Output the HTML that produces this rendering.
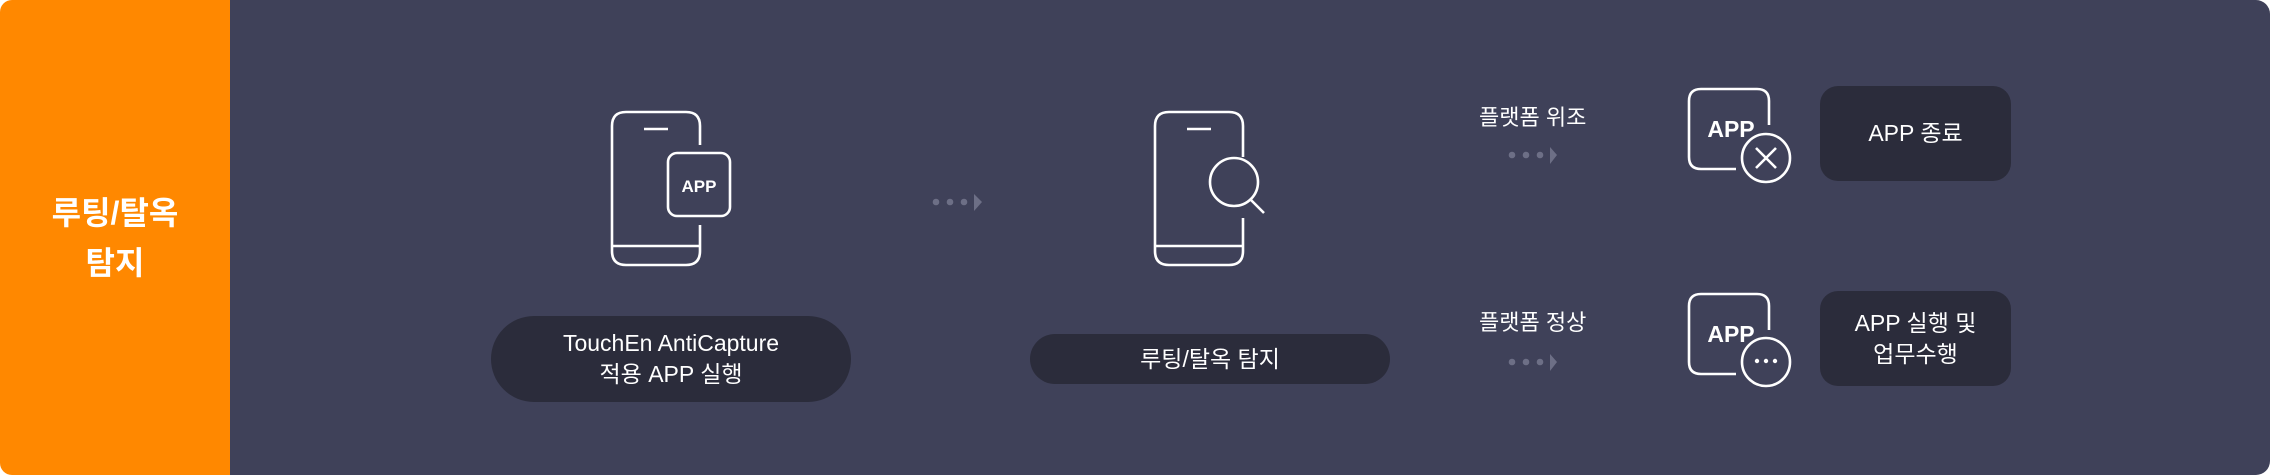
<!DOCTYPE html>
<html><head><meta charset="utf-8"><style>
html,body{margin:0;padding:0;background:#fff;}
body{width:2270px;height:475px;position:relative;overflow:hidden;font-family:"Liberation Sans","Noto Sans CJK KR",sans-serif;}
.orange{position:absolute;left:0;top:0;width:230px;height:475px;background:#ff8800;border-radius:12px 0 0 12px;}
.main{position:absolute;left:230px;top:0;width:2040px;height:475px;background:#3f4159;border-radius:0 14px 14px 0;}
.ot{position:absolute;left:0;width:230px;text-align:center;color:#fff;font-weight:bold;font-size:32px;line-height:50px;top:188px;}
.pill{position:absolute;background:#2b2c3b;color:#fff;text-align:center;font-size:23px;display:flex;align-items:center;justify-content:center;line-height:31px;}
.lbl{position:absolute;color:#fff;font-size:22px;}
svg{position:absolute;left:0;top:0;}
</style></head><body>
<div class="orange"></div>
<div class="main"></div>
<div class="ot">루팅/탈옥<br>탐지</div>
<svg width="2270" height="475" fill="none" stroke="#fff" stroke-width="2.6">
<path d="M700 145 V126 Q700 112 686 112 H626 Q612 112 612 126 V251 Q612 265 626 265 H686 Q700 265 700 251 V225"/>
<path d="M612 246 H700"/><path d="M644 129 H668"/>
<rect x="668" y="153" width="62" height="63" rx="9"/>
<text x="699" y="192" fill="#fff" stroke="none" font-size="17" font-weight="bold" text-anchor="middle" font-family="Liberation Sans">APP</text>
<path d="M1243 157 V126 Q1243 112 1229 112 H1169 Q1155 112 1155 126 V251 Q1155 265 1169 265 H1229 Q1243 265 1243 251 V218"/>
<path d="M1155 246 H1243"/><path d="M1187 129 H1211"/>
<circle cx="1234" cy="182" r="24"/><path d="M1251 200 L1264 213"/>
<path d="M1769 125 V101 Q1769 89 1757 89 H1701 Q1689 89 1689 101 V157 Q1689 169 1701 169 H1736"/>
<circle cx="1766" cy="158" r="24"/><path d="M1756 148 L1776 168 M1776 148 L1756 168"/>
<text x="1731" y="137" fill="#fff" stroke="none" font-size="23" font-weight="bold" text-anchor="middle" font-family="Liberation Sans">APP</text>
<path d="M1769 330 V306 Q1769 294 1757 294 H1701 Q1689 294 1689 306 V362 Q1689 374 1701 374 H1736"/>
<circle cx="1766" cy="362" r="24"/>
<text x="1731" y="342" fill="#fff" stroke="none" font-size="23" font-weight="bold" text-anchor="middle" font-family="Liberation Sans">APP</text>
<g fill="#fff" stroke="none"><circle cx="1757" cy="361" r="2.2"/><circle cx="1766" cy="361" r="2.2"/><circle cx="1775" cy="361" r="2.2"/></g>
<g fill="#6d6f86" stroke="none">
<circle cx="936" cy="202" r="3.3"/><circle cx="950" cy="202" r="3.3"/><circle cx="964" cy="202" r="3.3"/><path d="M974 194 L982 202 L974 211Z"/>
<circle cx="1512" cy="155" r="3.3"/><circle cx="1526" cy="155" r="3.3"/><circle cx="1540" cy="155" r="3.3"/><path d="M1550 147 L1557 155 L1550 164Z"/>
<circle cx="1512" cy="362" r="3.3"/><circle cx="1526" cy="362" r="3.3"/><circle cx="1540" cy="362" r="3.3"/><path d="M1550 354 L1557 362 L1550 371Z"/>
</g>
</svg>
<div class="pill" style="left:491px;top:316px;width:360px;height:86px;border-radius:43px;">TouchEn AntiCapture<br>적용 APP 실행</div>
<div class="pill" style="left:1030px;top:334px;width:360px;height:50px;border-radius:25px;">루팅/탈옥 탐지</div>
<div class="lbl" style="left:1479px;top:100px;">플랫폼 위조</div>
<div class="lbl" style="left:1479px;top:305px;">플랫폼 정상</div>
<div class="pill" style="left:1820px;top:86px;width:191px;height:95px;border-radius:18px;">APP 종료</div>
<div class="pill" style="left:1820px;top:291px;width:191px;height:95px;border-radius:18px;">APP 실행 및<br>업무수행</div>
</body></html>
